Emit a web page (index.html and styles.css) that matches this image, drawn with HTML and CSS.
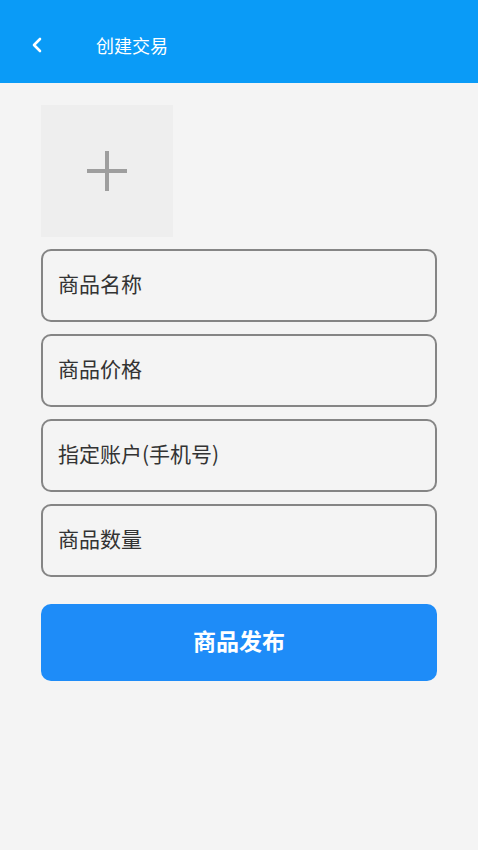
FILE: index.html
```html
<!DOCTYPE html>
<html lang="zh">
<head>
<meta charset="utf-8">
<link rel="stylesheet" href="styles.css">
</head>
<body>
<header class="topbar">
  <svg class="back" width="12" height="16" viewBox="0 0 12 16"><path d="M9 2 L3 8 L9 14" fill="none" stroke="#fff" stroke-width="2.6" stroke-linecap="round" stroke-linejoin="round"/></svg>
  <span class="title">创建交易</span>
</header>
<main class="content">
  <div class="upload">
    <svg width="40" height="40" viewBox="0 0 40 40"><rect x="0" y="18" width="40" height="4" fill="#9e9e9e"/><rect x="18" y="0" width="4" height="40" fill="#9e9e9e"/></svg>
  </div>
  <div class="field">商品名称</div>
  <div class="field">商品价格</div>
  <div class="field">指定账户(手机号)</div>
  <div class="field">商品数量</div>
  <button class="submit">商品发布</button>
</main>
</body>
</html>
```
FILE: styles.css
```css
html, body {
  margin: 0;
  padding: 0;
  background: #f4f4f4;
  font-family: "Noto Sans CJK SC", "Noto Sans", sans-serif;
}
.topbar {
  height: 83px;
  background: #0a9bf7;
  display: flex;
  align-items: center;
  padding: 10px 0 0 31px;
  box-sizing: border-box;
}
.back {
  display: block;
  margin-top: -4px;
}
.title {
  color: #fff;
  font-size: 18px;
  margin-left: 53px;
  margin-top: -4px;
}
.content {
  padding: 22px 41px 0 41px;
  display: flex;
  flex-direction: column;
}
.upload {
  width: 132px;
  height: 132px;
  background: #eeeeee;
  display: flex;
  align-items: center;
  justify-content: center;
  margin-bottom: 12px;
}
.field {
  height: 73px;
  box-sizing: border-box;
  border: 2px solid #858585;
  border-radius: 10px;
  margin-bottom: 12px;
  display: flex;
  align-items: center;
  padding-left: 15px;
  padding-bottom: 5px;
  font-size: 21px;
  color: #333;
}
.submit {
  margin-top: 15px;
  height: 77px;
  border: none;
  border-radius: 10px;
  background: #1e8cf8;
  color: #fff;
  font-family: "Noto Sans CJK SC", sans-serif;
  font-size: 23px;
  font-weight: bold;
  padding: 0 0 5px 0;
}
```
